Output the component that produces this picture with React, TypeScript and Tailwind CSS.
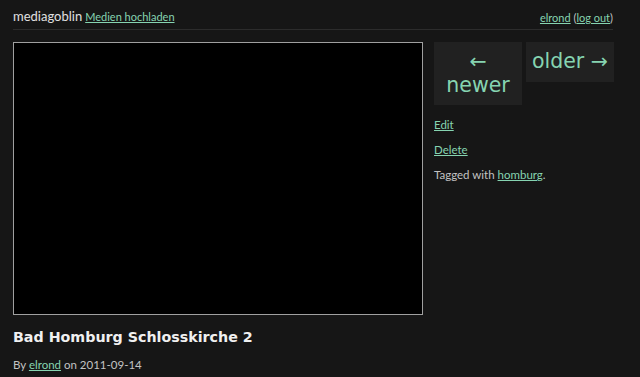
import React from "react";

const link = "text-[#86d4b1] underline";

export default function App() {
  return (
    <div className="min-h-[377px] bg-[#161616] text-[#c3c3c3] font-['Lato','Liberation_Sans',sans-serif]">
      <div className="w-[600px] ml-[13px]">
        <header className="flex justify-between items-end h-[30px] pb-[3px] border-b border-[#2c2c2c]">
          <div className="flex items-baseline gap-[3px]">
            <span className="text-[13px] text-[#e0e0e0]">mediagoblin</span>
            <a className={`${link} text-[11px]`}>Medien hochladen</a>
          </div>
          <div className="text-[11px]">
            <a className={link}>elrond</a> (<a className={link}>log out</a>)
          </div>
        </header>

        <div className="flex mt-[12px]">
          <div className="w-[410px]">
            <div className="w-[410px] h-[273px] bg-black border border-[#a0a0a0]"></div>
            <h1 className="mt-[12px] text-[14.25px] font-bold text-[#f0f0f0] font-['DejaVu_Sans',sans-serif] leading-[20px]">
              Bad Homburg Schlosskirche 2
            </h1>
            <p className="mt-[9px] text-[11.5px]">
              By <a className={link}>elrond</a> on 2011-09-14
            </p>
          </div>

          <div className="ml-[11px] flex-1">
            <div className="flex items-start gap-[4px] font-['DejaVu_Sans',sans-serif] text-[20.5px] text-[#86d4b1] leading-[24px]">
              <a className="w-[88px] h-[63px] bg-[#212121] flex flex-col items-center justify-center pb-[2px]">
                <span>←</span>
                <span>newer</span>
              </a>
              <a className="w-[88px] h-[40px] bg-[#212121] flex items-center justify-center pb-[2px]">
                older →
              </a>
            </div>
            <div className="mt-[12px] text-[11.5px] flex flex-col gap-[10px] leading-[15px]">
              <a className={link}>Edit</a>
              <a className={link}>Delete</a>
              <p>
                Tagged with <a className={link}>homburg</a>.
              </p>
            </div>
          </div>
        </div>
      </div>
    </div>
  );
}
